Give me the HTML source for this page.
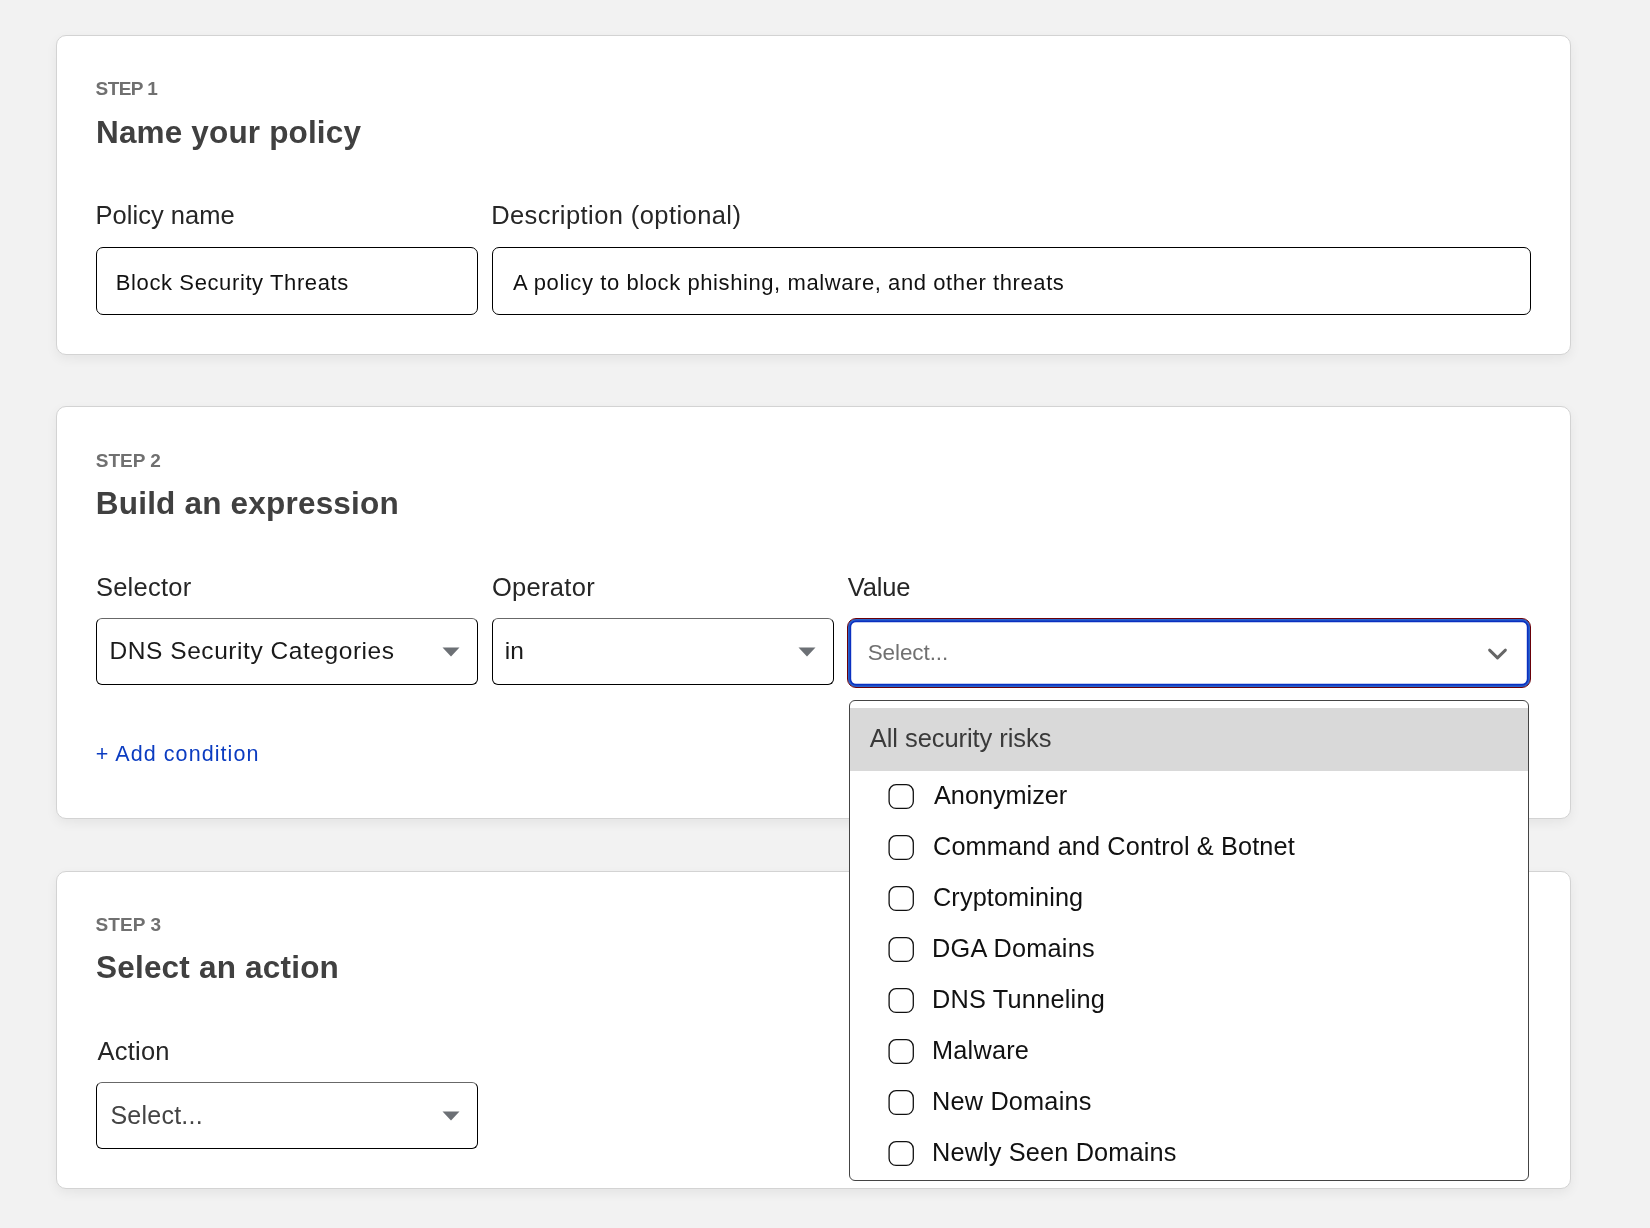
<!DOCTYPE html>
<html><head><meta charset="utf-8"><style>
html,body{margin:0;padding:0}
body{width:1650px;height:1228px;background:#f2f2f2;position:relative;overflow:hidden;font-family:'Liberation Sans', sans-serif}
.card{position:absolute;left:56px;width:1515px;background:#fff;border:1px solid #d3d3d3;border-radius:10px;box-sizing:border-box;box-shadow:0 4px 12px rgba(0,0,0,0.06)}
.t{position:absolute;line-height:normal;white-space:pre}
.box{position:absolute;box-sizing:border-box;border:1.5px solid #000;border-radius:7px;background:#fff}
.sel{border-top-color:#686868;border-radius:6px}
.ico{position:absolute;display:block}
</style></head><body>
<div class="card" style="top:35px;height:320px"></div>
<div class="card" style="top:406px;height:413px"></div>
<div class="card" style="top:871px;height:318px"></div>
<div class="box" style="left:96px;top:247px;width:382px;height:68px"></div>
<div class="box" style="left:492px;top:247px;width:1039px;height:68px"></div>
<div class="box sel" style="left:96px;top:618px;width:382px;height:67px"></div>
<div class="box sel" style="left:492px;top:618px;width:342px;height:67px"></div>
<div class="box sel" style="left:96px;top:1082px;width:382px;height:67px"></div>
<svg class="ico" style="left:442px;top:646.5px" width="18" height="10" viewBox="0 0 18 10"><path d="M0.5 0.5 L17.5 0.5 L9 9.5 Z" fill="#6c7075"/></svg>
<svg class="ico" style="left:797.5px;top:646.5px" width="18" height="10" viewBox="0 0 18 10"><path d="M0.5 0.5 L17.5 0.5 L9 9.5 Z" fill="#6c7075"/></svg>
<svg class="ico" style="left:442px;top:1110.5px" width="18" height="10" viewBox="0 0 18 10"><path d="M0.5 0.5 L17.5 0.5 L9 9.5 Z" fill="#6c7075"/></svg>
<div style="position:absolute;left:847px;top:618px;width:683.6px;height:70px;box-sizing:border-box;border-radius:9px;border:1.2px solid #6a0008;background:#fff;box-shadow:inset 0 0 0 1.5px #2a62cc, inset 0 0 0 3.2px #0a30c0"></div>
<svg class="ico" style="left:1486px;top:646px" width="23" height="15" viewBox="0 0 23 15"><path d="M3.6 4.1 L11.5 11.9 L19.4 4.1" fill="none" stroke="#666" stroke-width="2.9" stroke-linecap="round" stroke-linejoin="round"/></svg>
<div style="position:absolute;left:849px;top:700px;width:680px;height:481px;box-sizing:border-box;border:1.5px solid #444;border-radius:6px;background:#fff;overflow:hidden">
  <div style="position:absolute;left:0;top:6.5px;right:0;height:63px;background:#d9d9d9"></div>
</div>
<svg class="ico" style="left:0;top:0" width="1650" height="1228"><rect x="889.1" y="784.7" width="24.2" height="23.7" rx="7" fill="none" stroke="#111" stroke-width="1.3"/><rect x="889.1" y="835.7" width="24.2" height="23.7" rx="7" fill="none" stroke="#111" stroke-width="1.3"/><rect x="889.1" y="886.7" width="24.2" height="23.7" rx="7" fill="none" stroke="#111" stroke-width="1.3"/><rect x="889.1" y="937.7" width="24.2" height="23.7" rx="7" fill="none" stroke="#111" stroke-width="1.3"/><rect x="889.1" y="988.7" width="24.2" height="23.7" rx="7" fill="none" stroke="#111" stroke-width="1.3"/><rect x="889.1" y="1039.7" width="24.2" height="23.7" rx="7" fill="none" stroke="#111" stroke-width="1.3"/><rect x="889.1" y="1090.7" width="24.2" height="23.7" rx="7" fill="none" stroke="#111" stroke-width="1.3"/><rect x="889.1" y="1141.7" width="24.2" height="23.7" rx="7" fill="none" stroke="#111" stroke-width="1.3"/></svg>
<div style="position:absolute;left:0;top:0;width:1650px;height:1228px;will-change:transform">
<div class="t" style="left:95.60px;top:78px;font-size:19px;font-weight:700;color:#707070;letter-spacing:-0.560px">STEP 1</div>
<div class="t" style="left:96.00px;top:114px;font-size:31.5px;font-weight:700;color:#404040;letter-spacing:0.160px">Name your policy</div>
<div class="t" style="left:95.60px;top:201px;font-size:25.5px;font-weight:400;color:#262626;letter-spacing:0.020px">Policy name</div>
<div class="t" style="left:491.20px;top:201px;font-size:25.5px;font-weight:400;color:#262626;letter-spacing:0.419px">Description (optional)</div>
<div class="t" style="left:115.80px;top:269.5px;font-size:22px;font-weight:400;color:#111111;letter-spacing:0.610px">Block Security Threats</div>
<div class="t" style="left:513.00px;top:269.5px;font-size:22px;font-weight:400;color:#111111;letter-spacing:0.587px">A policy to block phishing, malware, and other threats</div>
<div class="t" style="left:95.80px;top:449.6px;font-size:19px;font-weight:700;color:#707070">STEP 2</div>
<div class="t" style="left:95.80px;top:485px;font-size:31.5px;font-weight:700;color:#404040;letter-spacing:0.200px">Build an expression</div>
<div class="t" style="left:95.90px;top:573px;font-size:25.5px;font-weight:400;color:#262626;letter-spacing:0.257px">Selector</div>
<div class="t" style="left:491.90px;top:573px;font-size:25.5px;font-weight:400;color:#262626;letter-spacing:0.300px">Operator</div>
<div class="t" style="left:847.80px;top:573px;font-size:25.5px;font-weight:400;color:#262626;letter-spacing:-0.200px">Value</div>
<div class="t" style="left:109.50px;top:637px;font-size:24.5px;font-weight:400;color:#1a1a1a;letter-spacing:0.555px">DNS Security Categories</div>
<div class="t" style="left:504.70px;top:637px;font-size:24.5px;font-weight:400;color:#1a1a1a">in</div>
<div class="t" style="left:867.70px;top:640.3px;font-size:22.5px;font-weight:400;color:#707070;letter-spacing:-0.088px">Select...</div>
<div class="t" style="left:95.80px;top:742.2px;font-size:21.5px;font-weight:400;color:#0b3cc1;letter-spacing:1.071px">+ Add condition</div>
<div class="t" style="left:95.60px;top:913.7px;font-size:19px;font-weight:700;color:#707070;letter-spacing:0.080px">STEP 3</div>
<div class="t" style="left:96.00px;top:949.4px;font-size:31.5px;font-weight:700;color:#404040;letter-spacing:0.200px">Select an action</div>
<div class="t" style="left:97.60px;top:1037px;font-size:25.5px;font-weight:400;color:#262626;letter-spacing:0.200px">Action</div>
<div class="t" style="left:110.40px;top:1100.5px;font-size:25px;font-weight:400;color:#444444;letter-spacing:0.250px">Select...</div>
<div class="t" style="left:869.80px;top:724.3px;font-size:25.5px;font-weight:400;color:#3a3a3a;letter-spacing:-0.065px">All security risks</div>
<div class="t" style="left:934.00px;top:781.3px;font-size:25.3px;font-weight:400;color:#111111;letter-spacing:-0.033px">Anonymizer</div>
<div class="t" style="left:933.00px;top:832.3px;font-size:25.3px;font-weight:400;color:#111111;letter-spacing:0.115px">Command and Control &amp; Botnet</div>
<div class="t" style="left:933.00px;top:883.3px;font-size:25.3px;font-weight:400;color:#111111;letter-spacing:0.100px">Cryptomining</div>
<div class="t" style="left:932.00px;top:934.3px;font-size:25.3px;font-weight:400;color:#111111;letter-spacing:0.240px">DGA Domains</div>
<div class="t" style="left:932.00px;top:985.3px;font-size:25.3px;font-weight:400;color:#111111;letter-spacing:0.217px">DNS Tunneling</div>
<div class="t" style="left:932.00px;top:1036.3px;font-size:25.3px;font-weight:400;color:#111111;letter-spacing:0.217px">Malware</div>
<div class="t" style="left:932.00px;top:1087.3px;font-size:25.3px;font-weight:400;color:#111111;letter-spacing:0.190px">New Domains</div>
<div class="t" style="left:932.00px;top:1138.3px;font-size:25.3px;font-weight:400;color:#111111;letter-spacing:0.147px">Newly Seen Domains</div>
</div>
</body></html>
